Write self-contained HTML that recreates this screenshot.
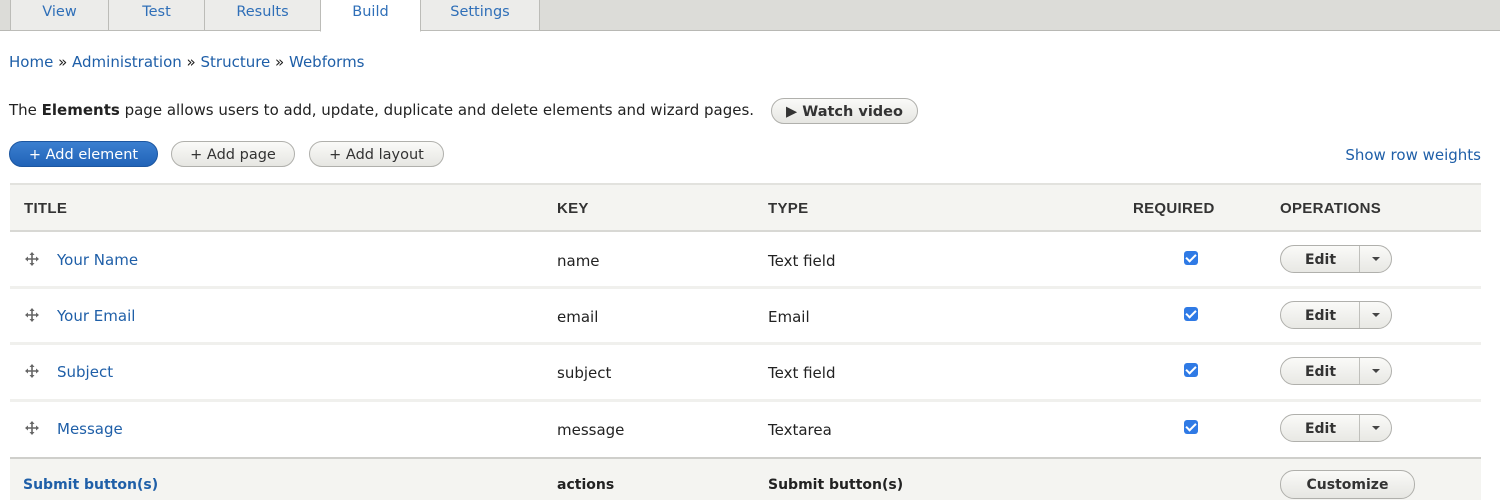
<!DOCTYPE html>
<html><head><meta charset="utf-8"><style>
*{box-sizing:border-box;margin:0;padding:0}
body{width:1500px;height:500px;overflow:hidden;background:#fff;font-family:"DejaVu Sans",sans-serif;font-size:15px;color:#222;position:relative}
.a{position:absolute;white-space:nowrap}
a,.l{color:#1f5fa8;text-decoration:none}
.tabbar{position:absolute;left:0;top:0;width:1500px;height:31px;background:#dcdcd8;border-bottom:1px solid #b8b8b4}
.tab{position:absolute;top:0;height:31px;background:#ececea;border:1px solid #bcbcb8;border-top:none;color:#2f6fb8;text-align:center;line-height:24px;font-size:14.5px}
.tab.act{background:#fff;border-bottom:1px solid #fff;height:32px}
.btn{position:absolute;height:26px;border:1px solid #b0b0ac;border-radius:14px;background:linear-gradient(#fafaf8,#e6e6e2);text-align:center;line-height:26px;font-size:14.5px;color:#333}
.btn.blue{background:linear-gradient(#3b7fd0,#2163b8);border-color:#1c56a0;color:#fff}
.hdr{position:absolute;left:10px;top:183px;width:1471px;height:49px;background:#f4f4f1;border-top:2px solid #e2e2de;border-bottom:2px solid #d8d8d4}
.th{position:absolute;top:200px;font-family:"Liberation Sans",sans-serif;font-weight:bold;font-size:15px;color:#333;letter-spacing:.3px}
.row{position:absolute;left:10px;width:1471px;border-bottom:3px solid #f0f0ed}
.cb{position:absolute;width:14px;height:14px;border-radius:3px;background:#2f7ae5}
.cb:after{content:"";position:absolute;left:4px;top:1px;width:4px;height:8px;border:solid #fff;border-width:0 2px 2px 0;transform:rotate(45deg)}
.edit{position:absolute;left:1280px;width:112px;height:28px;border:1px solid #b0b0ac;border-radius:14px;background:linear-gradient(#fafaf8,#e8e8e4)}
.edit span{position:absolute;left:0;width:79px;text-align:center;line-height:28px;font-weight:bold;color:#333;font-size:14px}
.edit i{position:absolute;left:78px;top:0;width:1px;height:26px;background:#c0c0bc}
.edit b{position:absolute;left:91px;top:11px;border:4px solid transparent;border-top:4px solid #444}
.foot{position:absolute;left:10px;top:457px;width:1471px;height:43px;background:#f4f4f1;border-top:2px solid #cfcfcb}
.mv{position:absolute}
</style></head><body>
<div class="tabbar"></div>
<div class="tab" style="left:10px;width:99px">View</div>
<div class="tab" style="left:108px;width:97px">Test</div>
<div class="tab" style="left:204px;width:117px">Results</div>
<div class="tab act" style="left:320px;width:101px">Build</div>
<div class="tab" style="left:420px;width:120px">Settings</div>

<div class="a" style="left:9px;top:53px"><a>Home</a> » <a>Administration</a> » <a>Structure</a> » <a>Webforms</a></div>
<div class="a" style="left:9px;top:101px">The <b>Elements</b> page allows users to add, update, duplicate and delete elements and wizard pages.</div>
<div class="btn" style="left:771px;top:98px;width:147px;font-weight:bold">&#9654; Watch video</div>

<div class="btn blue" style="left:9px;top:141px;width:149px">+ Add element</div>
<div class="btn" style="left:171px;top:141px;width:124px">+ Add page</div>
<div class="btn" style="left:309px;top:141px;width:135px">+ Add layout</div>
<div class="a l" style="right:19px;top:146px">Show row weights</div>

<div class="hdr"></div>
<div class="th" style="left:24px">TITLE</div>
<div class="th" style="left:557px">KEY</div>
<div class="th" style="left:768px">TYPE</div>
<div class="th" style="left:1133px">REQUIRED</div>
<div class="th" style="left:1280px">OPERATIONS</div>

<div class="row" style="top:232px;height:57px"></div>
<div class="row" style="top:289px;height:56px"></div>
<div class="row" style="top:345px;height:57px"></div>

<svg class="mv" style="left:24px;top:251px" width="16" height="16" viewBox="0 0 16 16"><path d="M8 2v12M2 8h12" stroke="#666" stroke-width="1.6"/><path d="M8 1l-2.5 3h5zM8 15l-2.5-3h5zM1 8l3-2.5v5zM15 8l-3-2.5v5z" fill="#666"/></svg>
<div class="a l" style="left:57px;top:251px">Your Name</div>
<div class="a" style="left:557px;top:252px">name</div>
<div class="a" style="left:768px;top:252px">Text field</div>
<div class="cb" style="left:1184px;top:251px"></div>
<div class="edit" style="top:245px"><span>Edit</span><i></i><b></b></div>

<svg class="mv" style="left:24px;top:307px" width="16" height="16" viewBox="0 0 16 16"><path d="M8 2v12M2 8h12" stroke="#666" stroke-width="1.6"/><path d="M8 1l-2.5 3h5zM8 15l-2.5-3h5zM1 8l3-2.5v5zM15 8l-3-2.5v5z" fill="#666"/></svg>
<div class="a l" style="left:57px;top:307px">Your Email</div>
<div class="a" style="left:557px;top:308px">email</div>
<div class="a" style="left:768px;top:308px">Email</div>
<div class="cb" style="left:1184px;top:307px"></div>
<div class="edit" style="top:301px"><span>Edit</span><i></i><b></b></div>

<svg class="mv" style="left:24px;top:363px" width="16" height="16" viewBox="0 0 16 16"><path d="M8 2v12M2 8h12" stroke="#666" stroke-width="1.6"/><path d="M8 1l-2.5 3h5zM8 15l-2.5-3h5zM1 8l3-2.5v5zM15 8l-3-2.5v5z" fill="#666"/></svg>
<div class="a l" style="left:57px;top:363px">Subject</div>
<div class="a" style="left:557px;top:364px">subject</div>
<div class="a" style="left:768px;top:364px">Text field</div>
<div class="cb" style="left:1184px;top:363px"></div>
<div class="edit" style="top:357px"><span>Edit</span><i></i><b></b></div>

<svg class="mv" style="left:24px;top:420px" width="16" height="16" viewBox="0 0 16 16"><path d="M8 2v12M2 8h12" stroke="#666" stroke-width="1.6"/><path d="M8 1l-2.5 3h5zM8 15l-2.5-3h5zM1 8l3-2.5v5zM15 8l-3-2.5v5z" fill="#666"/></svg>
<div class="a l" style="left:57px;top:420px">Message</div>
<div class="a" style="left:557px;top:421px">message</div>
<div class="a" style="left:768px;top:421px">Textarea</div>
<div class="cb" style="left:1184px;top:420px"></div>
<div class="edit" style="top:414px"><span>Edit</span><i></i><b></b></div>

<div class="foot"></div>
<div class="a l" style="left:23px;top:477px;font-weight:bold;font-size:14px">Submit button(s)</div>
<div class="a" style="left:557px;top:477px;font-weight:bold;font-size:14px">actions</div>
<div class="a" style="left:768px;top:477px;font-weight:bold;font-size:14px">Submit button(s)</div>
<div class="btn" style="left:1280px;top:470px;width:135px;height:29px;line-height:29px;font-weight:bold;font-size:14px">Customize</div>
</body></html>
